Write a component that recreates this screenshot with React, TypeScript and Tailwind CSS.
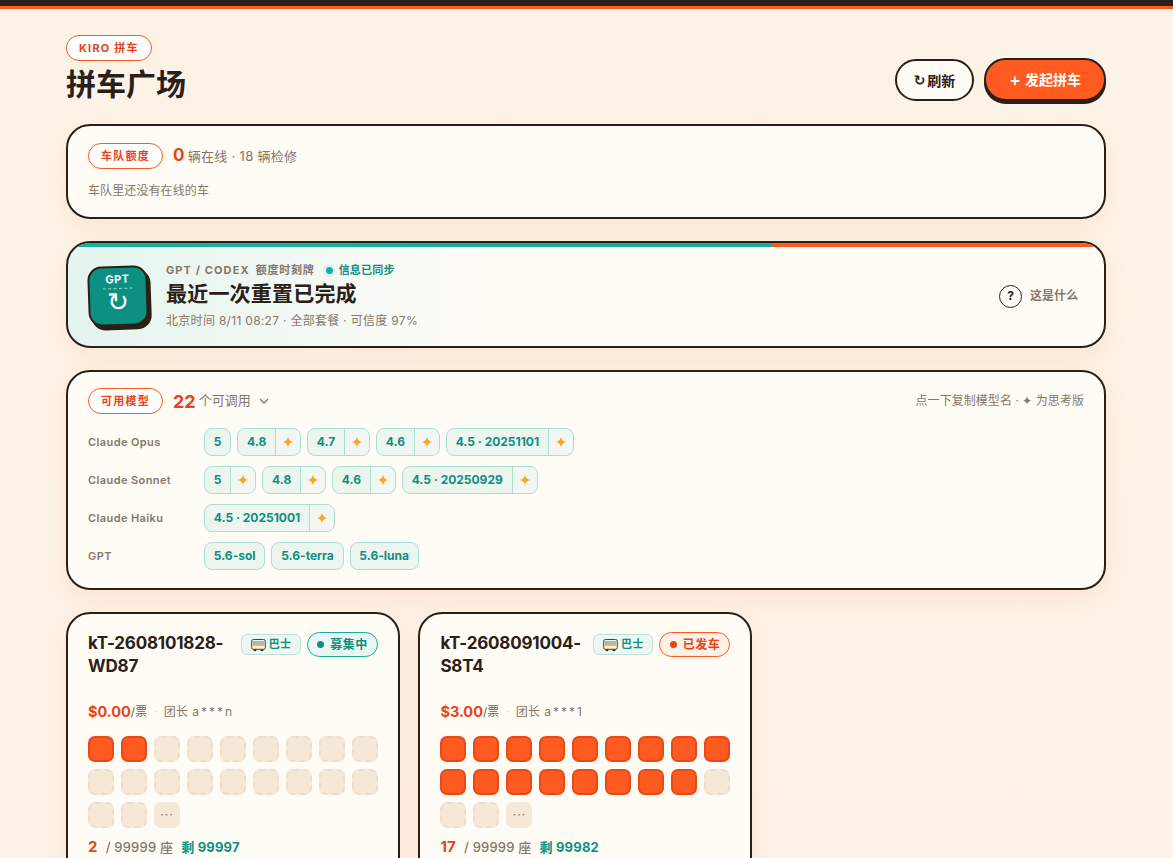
const FONT = "font-['Inter','Noto_Sans_CJK_SC',sans-serif]";

function Spark() {
  return (
    <svg width="12" height="12" viewBox="0 0 12 12" className="block">
      <path d="M6 0.5 C6.5 3.8 8.2 5.5 11.5 6 C8.2 6.5 6.5 8.2 6 11.5 C5.5 8.2 3.8 6.5 0.5 6 C3.8 5.5 5.5 3.8 6 0.5Z" fill="#f9a52b" />
    </svg>
  );
}

function Chip({ label, think }: { label: string; think?: boolean }) {
  return (
    <div className="flex h-[28px] items-stretch rounded-[8px] border border-[#a8e0d6] bg-[#edf5ef] text-[12px] font-bold leading-none text-[#0d8f82]">
      <span className="flex items-center px-[8.8px]">{label}</span>
      {think && (
        <span className="flex w-[25px] items-center justify-center rounded-r-[8px] border-l border-[#a8e0d6] bg-[#f2f7f1]">
          <Spark />
        </span>
      )}
    </div>
  );
}

function Row({ name, items }: { name: string; items: [string, boolean][] }) {
  return (
    <div className="flex items-center">
      <div className="w-[116px] text-[11px] font-semibold tracking-[0.4px] text-[#85776a]">{name}</div>
      <div className="flex gap-[6px]">
        {items.map(([l, t]) => (
          <Chip key={l} label={l} think={t} />
        ))}
      </div>
    </div>
  );
}

function Tag({ children }: { children: React.ReactNode }) {
  return (
    <span className="flex h-[26px] items-center rounded-full border border-[#ff5a1f] bg-white px-[12px] text-[11px] font-bold tracking-[1.25px] text-[#e8431a]">
      {children}
    </span>
  );
}

function Bus() {
  return (
    <svg width="15" height="14" viewBox="0 0 15 14" className="block">
      <circle cx="4" cy="11.5" r="1.7" fill="#2a2018" />
      <circle cx="11" cy="11.5" r="1.7" fill="#2a2018" />
      <rect x="0.7" y="1.5" width="13.6" height="9.8" rx="1.6" fill="#f4efe6" stroke="#4b4640" strokeWidth="1" />
      <rect x="1.6" y="3" width="11.8" height="3" fill="#7cc4ea" />
      <rect x="1.6" y="6" width="11.8" height="2" fill="#f8b62d" />
    </svg>
  );
}

function Seat({ on }: { on?: boolean }) {
  return on ? (
    <div className="h-[26px] rounded-[7px] border-2 border-[#e8491a] bg-[#ff5a1f]" />
  ) : (
    <div className="h-[26px] rounded-[7px] border-2 border-dashed border-[#ecdfcd] bg-[#f5e8d7]" />
  );
}

function Trip({
  id1, id2, price, lead, filled, count, left, status, live,
}: {
  id1: string; id2: string; price: string; lead: string; filled: number; count: string; left: string; status: string; live: boolean;
}) {
  return (
    <div className="h-[300px] rounded-[24px] border-2 border-[#2a2018] bg-[#fffcf6] px-[20px] pt-[18px] shadow-[0_8px_24px_rgba(255,120,60,0.08)]">
      <div className="flex items-start justify-between">
        <div className="text-[17px] font-bold leading-[23px] tracking-[-0.2px] text-[#2a2018]">
          {id1}
          <br />
          {id2}
        </div>
        <div className="flex items-center gap-[6px]">
          <span className="flex h-[21px] w-[60px] items-center justify-center gap-[3px] rounded-[6px] border border-[#b9e3da] bg-[#eef6f0] text-[11px] font-bold tracking-[0.3px] text-[#0d8f82]">
            <Bus />巴士
          </span>
          <span
            className={
              live
                ? "flex h-[25px] w-[71px] items-center justify-center gap-[6px] rounded-full border border-[#14b0a0] bg-[#e8f7f3] text-[12px] font-bold tracking-[0.5px] text-[#0d8f82]"
                : "flex h-[25px] w-[71px] items-center justify-center gap-[6px] rounded-full border border-[#ff5a1f] bg-[#fff0e8] text-[12px] font-bold tracking-[0.5px] text-[#e8431a]"
            }
          >
            <span className={live ? "h-[7px] w-[7px] rounded-full bg-[#0d8f82]" : "h-[7px] w-[7px] rounded-full bg-[#e8431a]"} />
            {status}
          </span>
        </div>
      </div>
      <div className="mt-[22px] flex h-[24px] items-center text-[12px] text-[#85776a]">
        <span className="text-[14.5px] font-bold text-[#e8431a]">{price}</span>
        <span className="text-[#6f6256]">/票</span>
        <span className="mx-[6.5px] text-[#e8dccb]">·</span>
        <span className="tracking-[0.4px]">团长 <span className="tracking-[2px]">{lead}</span></span>
      </div>
      <div className="mt-[12px] grid grid-cols-9 gap-[7px]">
        {Array.from({ length: 20 }).map((_, i) => (
          <Seat key={i} on={i < filled} />
        ))}
        <div className="flex h-[26px] items-center justify-center rounded-[7px] bg-[#f5e8d7] text-[12px] leading-none tracking-[1px] text-[#85776a]">
          ···
        </div>
      </div>
      <div className="mt-[9px] flex items-center text-[13px] leading-[20px] tracking-[0.2px]">
        <span className="pr-[8px] text-[15px] font-bold text-[#e8431a]">{count}</span>
        <span className="font-medium text-[#85776a]">/ 99999 座</span>
        <span className="ml-[8px] font-bold text-[#0d8f82]">剩 {left}</span>
      </div>
    </div>
  );
}

export default function App() {
  return (
    <div className={`${FONT} h-[858px] overflow-hidden bg-[linear-gradient(180deg,#fcf3e6_0%,#fdf1e5_100%)] text-[#2a2018]`}>
      <div className="h-[9px] border-b-[3px] border-[#ff5a1f] bg-[#2a2018]" />
      <div className="ml-[66px] w-[1040px] pt-[26px]">
        <div className="flex items-start justify-between">
          <div className="flex flex-col items-start">
            <span className="flex h-[26px] items-center rounded-full border border-[#ff5a1f] bg-white px-[12px] text-[11px] font-bold tracking-[1.2px] text-[#e8431a]">
              KIRO 拼车
            </span>
            <h1 className="mt-[4px] text-[30px] font-bold leading-[38px] text-[#2a2018]">拼车广场</h1>
          </div>
          <div className="mt-[23px] flex items-start gap-[10px]">
            <button className="mt-[1px] flex h-[42px] w-[79px] items-center justify-center gap-[2px] rounded-full border-2 border-[#2a2018] bg-[#fffcf6] text-[14px] font-bold">
              <span className="font-['DejaVu_Sans',sans-serif]">↻</span>刷新
            </button>
            <button className="flex h-[43px] w-[122px] items-center justify-center gap-[4px] rounded-full border-2 border-[#2a2018] bg-[#ff5a1f] text-[14px] font-bold text-white shadow-[0_3px_0_#2a2018]">
              <span className="text-[18px] font-medium leading-none">+</span>发起拼车
            </button>
          </div>
        </div>

        <section className="mt-[21px] h-[95px] rounded-[24px] border-2 border-[#2a2018] bg-[#fffcf6] px-[20px] pt-[17px] shadow-[0_8px_24px_rgba(255,120,60,0.1)]">
          <div className="flex items-center gap-[10px]">
            <Tag>车队额度</Tag>
            <div className="flex items-baseline gap-[3px] text-[13px] tracking-[0.3px] text-[#85776a]">
              <span className="text-[17px] font-bold text-[#e8431a]">0</span>
              辆在线 · 18 辆检修
            </div>
          </div>
          <p className="mt-[13px] text-[12px] leading-[18px] tracking-[0.1px] text-[#85776a]">车队里还没有在线的车</p>
        </section>

        <section className="relative mt-[22px] flex h-[107px] items-center overflow-hidden rounded-[24px] border-2 border-[#2a2018] bg-[linear-gradient(90deg,#e4f4ef_0%,#f4f9f4_25%,#fffcf6_40%)] px-[20px] pt-[3px] shadow-[0_8px_24px_rgba(255,120,60,0.1)]">
          <div className="absolute inset-x-0 top-0 flex h-[4px] bg-[#ff5a1f]">
            <div className="w-[68%] bg-[#14b0a0]" />
          </div>
          <div className="flex h-[60px] w-[60px] rotate-[-2deg] flex-col items-center rounded-[14px] border-2 border-[#2a2018] bg-[#0d8f82] pt-[4px] text-white shadow-[3px_4px_0_#2a2018]">
            <span className="text-[11px] font-bold leading-[14px] tracking-[0.5px]">GPT</span>
            <span className="mt-[2px] h-0 w-[30px] border-t border-dashed border-[#9ed8cf]" />
            <span className="font-['DejaVu_Sans',sans-serif] text-[26px] leading-[27px]">↻</span>
          </div>
          <div className="ml-[18px]">
            <div className="flex h-[16px] items-center text-[11px] font-bold tracking-[0.8px] text-[#85776a]">
              <span className="tracking-[1.1px]">GPT / CODEX</span>
              <span className="ml-[6px]">额度时刻牌</span>
              <span className="ml-[11px] mr-[6px] h-[7px] w-[7px] rounded-full bg-[#14b0a0] shadow-[0_0_0_3px_#dff3ee]" />
              <span className="font-bold tracking-[0.2px] text-[#0d8f82]">信息已同步</span>
            </div>
            <div className="mt-[2px] text-[21px] font-bold leading-[28px] tracking-[0.2px]">最近一次重置已完成</div>
            <div className="mt-[4px] text-[12px] leading-[18px] tracking-[0.3px] text-[#85776a]">北京时间 8/11 08:27 · 全部套餐 · 可信度 97%</div>
          </div>
          <div className="ml-auto mr-[6px] flex items-center gap-[8px]">
            <span className="flex h-[23px] w-[23px] items-center justify-center rounded-full border border-[#2a2018] text-[12px] font-bold">?</span>
            <span className="text-[12px] font-bold text-[#85776a]">这是什么</span>
          </div>
        </section>

        <section className="mt-[22px] h-[220px] rounded-[24px] border-2 border-[#2a2018] bg-[#fffcf6] px-[20px] pt-[16px] shadow-[0_8px_24px_rgba(255,120,60,0.1)]">
          <div className="flex h-[26px] items-center">
            <Tag>可用模型</Tag>
            <span className="ml-[10px] text-[18px] font-bold text-[#e8431a]">22</span>
            <span className="ml-[3px] text-[13px] text-[#85776a]">个可调用</span>
            <svg width="10" height="6" viewBox="0 0 10 6" className="ml-[8px]" fill="none" stroke="#85776a" strokeWidth="1.3"><path d="M1 1l4 4 4-4" /></svg>
            <span className="ml-auto text-[12px] tracking-[0.05px] text-[#85776a]">点一下复制模型名 · ✦ 为思考版</span>
          </div>
          <div className="mt-[14px] flex flex-col gap-[10px]">
            <Row name="Claude Opus" items={[["5", false], ["4.8", true], ["4.7", true], ["4.6", true], ["4.5 · 20251101", true]]} />
            <Row name="Claude Sonnet" items={[["5", true], ["4.8", true], ["4.6", true], ["4.5 · 20250929", true]]} />
            <Row name="Claude Haiku" items={[["4.5 · 20251001", true]]} />
            <Row name="GPT" items={[["5.6-sol", false], ["5.6-terra", false], ["5.6-luna", false]]} />
          </div>
        </section>

        <div className="mt-[22px] grid grid-cols-[334px_334px] gap-[18.4px]">
          <Trip id1="kT-2608101828-" id2="WD87" price="$0.00" lead="a***n" filled={2} count="2" left="99997" status="募集中" live />
          <Trip id1="kT-2608091004-" id2="S8T4" price="$3.00" lead="a***1" filled={17} count="17" left="99982" status="已发车" live={false} />
        </div>
      </div>
    </div>
  );
}
